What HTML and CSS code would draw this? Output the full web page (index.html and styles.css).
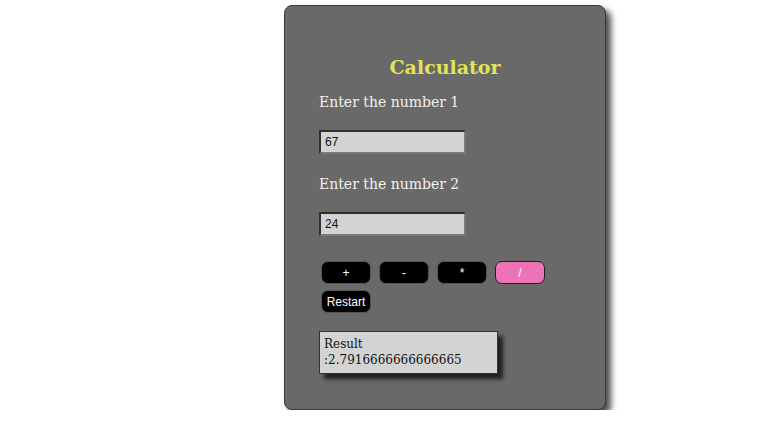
FILE: index.html
```html
<!DOCTYPE html>
<html>
<head>
<meta charset="utf-8">
<link rel="stylesheet" href="styles.css">
</head>
<body>
<div class="card">
  <h1 class="title">Calculator</h1>
  <label class="label">Enter the number 1</label>
  <input class="field" type="text" value="67">
  <label class="label">Enter the number 2</label>
  <input class="field" type="text" value="24">
  <div class="buttons">
    <button class="btn">+</button>
    <button class="btn">-</button>
    <button class="btn">*</button>
    <button class="btn active">/</button>
    <button class="btn">Restart</button>
  </div>
  <div class="result">Result :2.7916666666666665</div>
</div>
</body>
</html>
```
FILE: styles.css
```css
html, body {
  margin: 0;
  padding: 0;
  background: #ffffff;
}
body {
  padding: 5px 0 0 284px;
}
.card {
  box-sizing: border-box;
  width: 322px;
  height: 405px;
  background: #696969;
  border: 1px solid #3a3a3a;
  border-radius: 8px;
  box-shadow: 5px 5px 6px rgba(0,0,0,0.7);
  padding: 48px 34px 0 34px;
  display: flex;
  flex-direction: column;
  align-items: flex-start;
  font-family: "DejaVu Serif", Georgia, serif;
}
.title {
  align-self: stretch;
  text-align: center;
  margin: 0 0 13px 0;
  color: #e1e35a;
  font-size: 19px;
  font-weight: bold;
  line-height: 26px;
}
.label {
  color: #f2f2f2;
  font-size: 14px;
  line-height: 18px;
  margin: 0 0 19px 0;
}
.field {
  box-sizing: border-box;
  width: 147px;
  height: 24px;
  margin: 0 0 21px 0;
  padding: 0 4px;
  background: #d3d3d3;
  border: 2px solid;
  border-color: #2f2f2f #7a7a7a #7a7a7a #2f2f2f;
  font-family: "Liberation Sans", Arial, sans-serif;
  font-size: 12px;
  color: #111;
}
.buttons {
  display: flex;
  flex-wrap: wrap;
  gap: 6px 8px;
  width: 254px;
  margin: 4px 0 0 2px;
}
.btn {
  box-sizing: border-box;
  width: 50px;
  height: 23px;
  background: #000;
  color: #fff;
  border: 1px solid #555;
  border-radius: 7px;
  font-family: "Liberation Sans", Arial, sans-serif;
  font-size: 12px;
  padding: 0;
}
.btn.active {
  background: #ee72b8;
  border-color: #222;
}
.result {
  box-sizing: border-box;
  width: 179px;
  margin-top: 18px;
  padding: 4px 4px 5px 4px;
  background: #d3d3d3;
  border: 1px solid #333;
  box-shadow: 5px 5px 4px rgba(0,0,0,0.7);
  color: #111;
  font-family: "DejaVu Serif", Georgia, serif;
  font-size: 12px;
  line-height: 16px;
}
```
